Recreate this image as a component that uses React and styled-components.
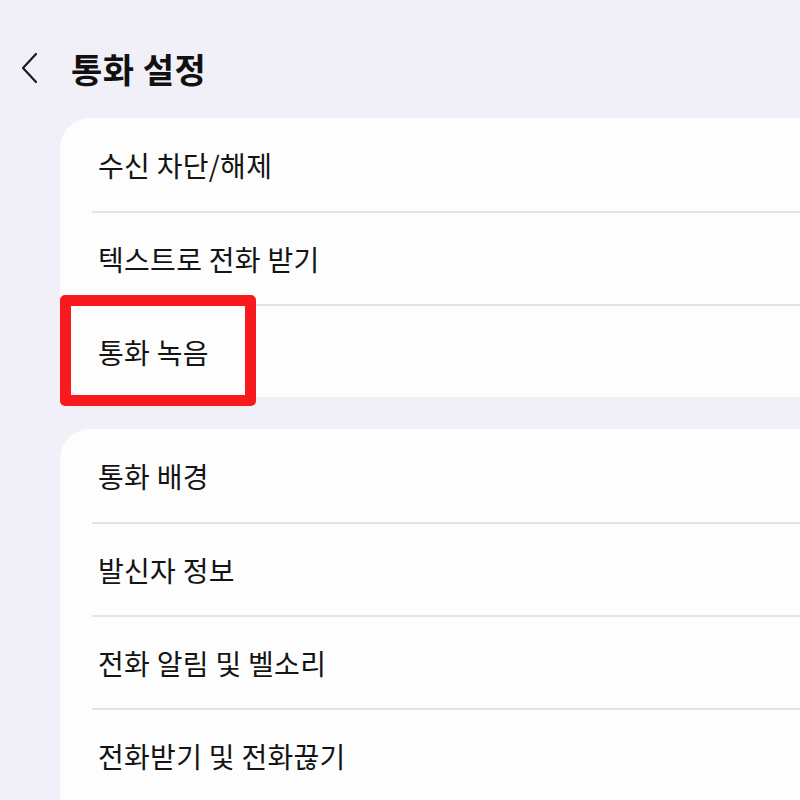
import React from 'react';
import styled, { createGlobalStyle } from 'styled-components';

const Global = createGlobalStyle`
  html, body {
    margin: 0;
    padding: 0;
    background: #f1eff8;
    overflow: hidden;
  }
  body {
    font-family: "Noto Sans CJK KR", "Noto Sans", sans-serif;
    color: #111;
  }
`;

const Page = styled.div`
  width: 800px;
  height: 800px;
  overflow: hidden;
  display: flex;
  flex-direction: column;
`;

const Header = styled.header`
  display: flex;
  align-items: center;
  flex-shrink: 0;
  height: 68px;
  padding: 34px 0 0 20px;
  gap: 31px;
`;

const BackButton = styled.button`
  border: none;
  background: none;
  padding: 0;
  display: flex;
  width: 20px;
  height: 34px;
  align-items: center;
  cursor: pointer;
`;

const Title = styled.h1`
  margin: 0;
  font-size: 34px;
  font-weight: 700;
  letter-spacing: 0.5px;
  color: #111;
`;

const Card = styled.section`
  background: #fdfdfd;
  border-radius: 30px 0 0 30px;
  margin: ${p => p.$top}px -40px 0 60px;
  padding-bottom: ${p => (p.$continues ? 60 : 0)}px;
  display: flex;
  flex-direction: column;
  flex-shrink: 0;
`;

const Row = styled.div`
  position: relative;
  height: 93px;
  flex-shrink: 0;
  margin-left: 32px;
  padding-left: 6px;
  display: flex;
  align-items: center;
  font-size: 28px;
  letter-spacing: 0.3px;
  color: #141414;
  border-top: ${p => (p.$first ? 'none' : '2px solid #e4e4e6')};
  box-sizing: border-box;
`;

const Highlight = styled.div`
  position: absolute;
  left: -32px;
  top: -11px;
  width: 196px;
  height: 111px;
  border: 11px solid #f71b1d;
  border-radius: 5px;
  box-sizing: border-box;
  pointer-events: none;
`;

const groups = [
  ['수신 차단/해제', '텍스트로 전화 받기', '통화 녹음'],
  ['통화 배경', '발신자 정보', '전화 알림 및 벨소리', '전화받기 및 전화끊기'],
];

export default function App() {
  return (
    <Page>
      <Global />
      <Header>
        <BackButton aria-label="뒤로">
          <svg width="18" height="32" viewBox="0 0 18 32">
            <path d="M16 2 L3 16 L16 30" fill="none" stroke="#1a1a1a" strokeWidth="2.2" strokeLinecap="round" strokeLinejoin="round" />
          </svg>
        </BackButton>
        <Title>통화 설정</Title>
      </Header>
      <Card $top={16}>
        {groups[0].map((label, i) => (
          <Row key={label} $first={i === 0}>
            {label}
            {label === '통화 녹음' && <Highlight />}
          </Row>
        ))}
      </Card>
      <Card $top={32} $continues>
        {groups[1].map((label, i) => (
          <Row key={label} $first={i === 0}>{label}</Row>
        ))}
      </Card>
    </Page>
  );
}
